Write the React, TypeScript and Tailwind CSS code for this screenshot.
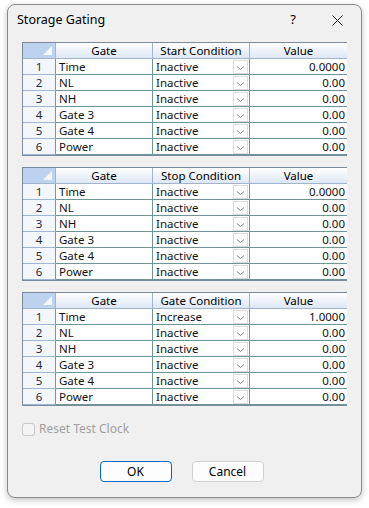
import React from 'react'

type Row = { gate: string; cond: string; value: string }

const rows = (first: string, firstValue: string): Row[] => [
  { gate: 'Time', cond: first, value: firstValue },
  { gate: 'NL', cond: 'Inactive', value: '0.00' },
  { gate: 'NH', cond: 'Inactive', value: '0.00' },
  { gate: 'Gate 3', cond: 'Inactive', value: '0.00' },
  { gate: 'Gate 4', cond: 'Inactive', value: '0.00' },
  { gate: 'Power', cond: 'Inactive', value: '0.00' },
]

const grids = [
  { title: 'Start Condition', rows: rows('Inactive', '0.0000') },
  { title: 'Stop Condition', rows: rows('Inactive', '0.0000') },
  { title: 'Gate Condition', rows: rows('Increase', '1.0000') },
]

function Chevron() {
  return (
    <svg width="9" height="6" viewBox="0 0 9 6" className="mt-[4px]">
      <path d="M1 1.5 L4.5 4.5 L8 1.5" fill="none" stroke="#808080" strokeWidth="1" />
    </svg>
  )
}

function Grid({ title, data }: { title: string; data: Row[] }) {
  const head = 'h-[16px] flex items-center justify-center border-r border-b border-[#a0b4cc] bg-gradient-to-b from-[#ffffff] to-[#dde7f4] text-[#000]'
  return (
    <div className="w-[325px] border border-[#7a8a9a] grid grid-cols-[33px_97px_97px_97px] text-[11.5px] leading-none text-[#111]">
      <div className="h-[16px] relative bg-[#bcd2ee] border-r border-b border-[#a0b4cc]">
        <div className="absolute right-[3px] bottom-[3px] w-0 h-0 border-l-[9px] border-l-transparent border-b-[9px] border-b-[#f4f8fd]" />
      </div>
      <div className={head}>Gate</div>
      <div className={head}>{title}</div>
      <div className={head + ' border-r-0'}>Value</div>
      {data.map((r, i) => (
        <React.Fragment key={i}>
          <div className="h-[16px] flex items-center justify-center bg-[#f3f7fc] border-r border-b border-[#6f95c8] border-b-[#9fb6d4] text-[#1a2a40]">
            {i + 1}
          </div>
          <div className="h-[16px] flex items-center pl-[3px] bg-white border-r border-b border-[#6e9696]">
            {r.gate}
          </div>
          <div className="h-[16px] flex items-center pl-[3px] pr-[1px] bg-white border-r border-b border-[#6e9696]">
            <span className="flex-1">{r.cond}</span>
            <div className="w-[15px] h-[14px] flex justify-center border border-[#dcdcdc] bg-white">
              <Chevron />
            </div>
          </div>
          <div className="h-[16px] flex items-center justify-end pr-[2px] bg-white border-b border-[#6e9696]">
            {r.value}
          </div>
        </React.Fragment>
      ))}
    </div>
  )
}

export default function App() {
  return (
    <div className="w-[369px] h-[508px] bg-white pt-[4px] pl-[7px]" style={{ fontFamily: '"Noto Sans", sans-serif' }}>
      <div className="w-[355px] h-[494px] bg-[#f0f0f0] border border-[#8a8a8a] rounded-[8px] shadow-[0_2px_6px_rgba(0,0,0,0.25)] flex flex-col">
        <div className="h-[30px] flex items-center pl-[9px] text-[12.5px] text-black">
          <span className="flex-1 mt-[1px]">Storage Gating</span>
          <span className="w-[16px] text-center mr-[31px] text-[13px]">?</span>
          <svg width="11" height="11" viewBox="0 0 11 11" className="mr-[18px]">
            <path d="M0.5 0.5 L10.5 10.5 M10.5 0.5 L0.5 10.5" stroke="#222" strokeWidth="1" />
          </svg>
        </div>
        <div className="pl-[14px] pt-[7px] flex flex-col gap-[11px]">
          {grids.map((g) => (
            <Grid key={g.title} title={g.title} data={g.rows} />
          ))}
        </div>
        <div className="pl-[14px] mt-[14px] flex items-center gap-[4px] text-[12px] text-[#a0a0a0]">
          <div className="w-[13px] h-[13px] border border-[#c8c8c8] rounded-[3px] bg-[#f4f4f4]" />
          <span>Reset Test Clock</span>
        </div>
        <div className="mt-[23px] flex justify-center gap-[20px] pr-[6px] text-[12px] text-black">
          <button className="w-[72px] h-[21px] rounded-[4px] border-[1.5px] border-[#0067c0] bg-[#fdfdfd]">OK</button>
          <button className="w-[72px] h-[21px] rounded-[4px] border border-[#d0d0d0] bg-[#fdfdfd]">Cancel</button>
        </div>
      </div>
    </div>
  )
}
